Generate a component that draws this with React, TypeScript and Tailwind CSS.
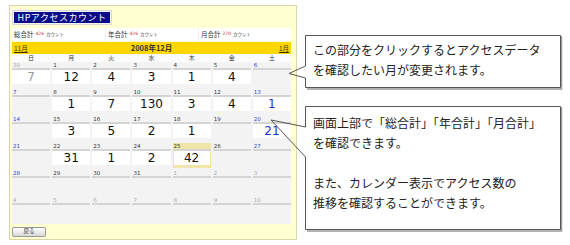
import React from 'react';
import clsx from 'clsx';

type Day = { d: number; v?: string; o?: boolean; today?: boolean };

const weeks: Day[][] = [
  [{ d: 30, v: '7', o: true }, { d: 1, v: '12' }, { d: 2, v: '4' }, { d: 3, v: '3' }, { d: 4, v: '1' }, { d: 5, v: '4' }, { d: 6 }],
  [{ d: 7 }, { d: 8, v: '1' }, { d: 9, v: '7' }, { d: 10, v: '130' }, { d: 11, v: '3' }, { d: 12, v: '4' }, { d: 13, v: '1' }],
  [{ d: 14 }, { d: 15, v: '3' }, { d: 16, v: '5' }, { d: 17, v: '2' }, { d: 18, v: '1' }, { d: 19 }, { d: 20, v: '21' }],
  [{ d: 21 }, { d: 22, v: '31' }, { d: 23, v: '1' }, { d: 24, v: '2' }, { d: 25, v: '42', today: true }, { d: 26 }, { d: 27 }],
  [{ d: 28 }, { d: 29 }, { d: 30 }, { d: 31 }, { d: 1, o: true }, { d: 2, o: true }, { d: 3, o: true }],
  [4, 5, 6, 7, 8, 9, 10].map((d) => ({ d, o: true })),
];

const dayNames = ['日', '月', '火', '水', '木', '金', '土'];

const jp = { fontFamily: '"Noto Sans CJK JP", "DejaVu Sans", sans-serif' };
const num = { fontFamily: '"DejaVu Sans", sans-serif' };

function Cell({ day, col }: { day: Day; col: number }) {
  const weekend = col === 0 || col === 6;
  const labelColor = day.o ? 'text-[#aaaaaa]' : weekend ? 'text-[#3340dd]' : 'text-[#333333]';
  const valueColor = day.o ? 'text-[#999999]' : col === 6 ? 'text-[#2233cc]' : 'text-[#111111]';
  return (
    <div className="h-[27px]">
      <div className={clsx('flex flex-col', day.today && 'bg-[#efe6a6] pb-[3px]')}>
        <div
          className={clsx('h-[8px] border-b-2 border-[#d4d4d4] pl-px text-[5.5px] leading-[6px]', labelColor)}
          style={num}
        >
          {day.d}
        </div>
        {day.v && (
          <div
            className={clsx(
              'h-[14px] bg-white text-center text-[12px] leading-[15px]',
              day.today && 'mx-px',
              valueColor,
            )}
            style={num}
          >
            {day.v}
          </div>
        )}
      </div>
    </div>
  );
}

function Total({ label, value, first }: { label: string; value: string; first?: boolean }) {
  return (
    <div className={clsx('flex items-center gap-[2px] pl-[2px]', !first && 'border-l border-[#eeeeee]')}>
      <span className="text-[6.5px] leading-none text-[#333333]">{label}</span>
      <span className="text-[4.5px] leading-none text-[#d03030]" style={num}>
        {value}
      </span>
      <span className="text-[4.5px] leading-none text-[#333333]">カウント</span>
    </div>
  );
}

export default function App() {
  return (
    <div className="relative h-[245px] w-[570px] overflow-hidden bg-white leading-none" style={jp}>
      {/* panel */}
      <div className="ml-[9px] mt-[5px] h-[235px] w-[288px] border border-[#d8d6a8] bg-[#ffffd2] pl-[2px] pt-[4px]">
        <div className="flex w-[279px] flex-col">
          <div className="flex w-fit border border-[#d8d8d8] bg-[#f4f4f4] p-px">
            <div className="flex h-[11px] w-[96px] items-center justify-center bg-[#0c0c88] text-[9px] leading-none tracking-[0.5px] text-white">
              HPアクセスカウント
            </div>
          </div>

          <div className="mt-[3px] grid h-[13px] grid-cols-3 bg-white">
            <Total label="総合計" value="426" first />
            <Total label="年合計" value="426" />
            <Total label="月合計" value="270" />
          </div>

          <div className="relative mt-px flex h-[12px] items-center justify-between bg-[#ffd600] px-[2px] text-[6.5px] leading-none text-[#333300]">
            <span className="underline">11月</span>
            <span className="absolute left-0 right-0 text-center text-[7.5px] font-bold text-[#333333]">2008年12月</span>
            <span className="underline">1月</span>
          </div>

          <div className="grid h-[8px] grid-cols-7 gap-x-[2px] bg-[#fbfbfb]">
            {dayNames.map((n) => (
              <div key={n} className="text-center text-[6px] leading-[8px] text-[#333333]">
                {n}
              </div>
            ))}
          </div>

          <div className="grid grid-cols-7 gap-x-[2px] bg-[#f3f3f3]">
            {weeks.map((w, wi) => w.map((day, ci) => <Cell key={`${wi}-${ci}`} day={day} col={ci} />))}
          </div>

          <button className="mt-[3px] flex h-[10px] w-[34px] items-center justify-center rounded-[2px] border border-[#9a9a9a] bg-gradient-to-b from-[#ffffff] to-[#d8d8d8] text-[5.5px] leading-none text-[#333333]">
            戻る
          </button>
        </div>
      </div>

      {/* callout outlines */}
      <svg className="pointer-events-none absolute left-0 top-0" width="570" height="245" viewBox="0 0 570 245">
        <path d="M307 37 H561.5 V89 H307" fill="none" stroke="#9a9a9a" strokeWidth="1.5" />
        <path d="M305.5 78 V87.5 H560.5 V35.5 H305.5 V66" fill="white" stroke="#555555" strokeWidth="1" />
        <polyline points="305.5,66 289,73.5 305.5,78" fill="none" stroke="#555555" strokeWidth="1" />

        <path d="M307 108 H561.5 V231 H307" fill="none" stroke="#9a9a9a" strokeWidth="1.5" />
        <path d="M305.5 157 V229.5 H560.5 V106.5 H305.5 V127" fill="white" stroke="#555555" strokeWidth="1" />
        <polyline points="305.5,127 271,120 305.5,157" fill="none" stroke="#555555" strokeWidth="1" />
      </svg>

      <div className="absolute left-[313px] top-[40px] text-[12px] leading-[20px] text-[#222222]">
        <p>この部分をクリックするとアクセスデータ</p>
        <p>を確認したい月が変更されます。</p>
      </div>

      <div className="absolute left-[313px] top-[113px] text-[12px] leading-[20px] text-[#222222]">
        <p>画面上部で「総合計」「年合計」「月合計」</p>
        <p>を確認できます。</p>
        <p>&nbsp;</p>
        <p>また、カレンダー表示でアクセス数の</p>
        <p>推移を確認することができます。</p>
      </div>
    </div>
  );
}
